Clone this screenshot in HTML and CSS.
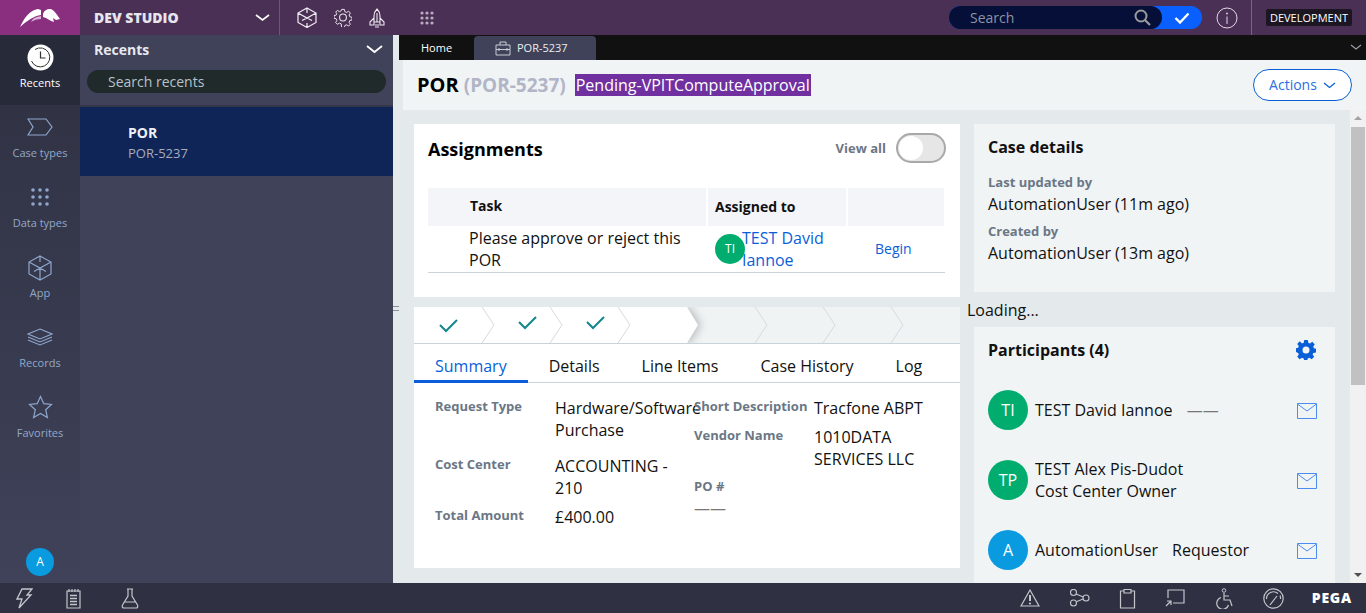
FILE: index.html
```html
<!DOCTYPE html>
<html lang="en">
<head>
    <meta charset="UTF-8">
    <title>POR-5237 - Dev Studio</title>
    <link rel="stylesheet" href="styles.css">
</head>
<body>
    <header class="topbar">
        <div class="logo">
            <svg width="40" height="18" viewBox="0 0 40 18"><path d="M0 18C4 9 10 1 18 0l3 1v5C14 7 8 11 0 18z" fill="#fff"/><path d="M11 13c2-4 5-5 10-6v3c-4 0-7 1-10 3z" fill="#d8b6d4"/><path d="M23 5c1-3 3-5 8-5 4 2 6 6 9 10l-4 1-3-2 1 4c-4-1-7-4-11-5z" fill="#fff"/></svg>
        </div>
        <div class="studio">
            <span class="studio-name">DEV STUDIO</span>
            <svg class="chev" width="15" height="8" viewBox="0 0 15 8"><path d="M1 1l6.500 5L14 1" fill="none" stroke="#fff" stroke-width="1.600"/></svg>
        </div>
        <div class="top-tools">
            <svg width="20" height="21" viewBox="0 0 20 21" class="tool-cube"><path d="M10 1l9 5v9.500l-9 5-9-5V6zM1 6l9 5 9-5M10 1v5M10 11l-5 2.500M10 11l5 2.500M10 16v4.500" fill="none" stroke="#f2f0f4" stroke-width="1.200"/></svg>
            <svg width="18" height="19" viewBox="0 0 20 20" class="tool-gear"><circle cx="10" cy="10" r="3.800" fill="none" stroke="#e8e4ec" stroke-width="1.200"/><path d="M8.500 1h3l.5 2.500 2 .9 2.200-1.400 2 2.100-1.400 2.100.8 2 2.400.6v3l-2.400.5-.8 2 1.400 2.100-2 2.100-2.200-1.400-2 .9-.5 2.500h-3L8 17.100l-2-.9L3.800 17.600l-2-2.100L3.200 13.400l-.8-2L0 10.900v-3l2.400-.6.800-2L1.800 4.200l2-2.100L6 3.500l2-.9z" fill="none" stroke="#e8e4ec" stroke-width="1.100"/></svg>
            <svg width="16" height="20" viewBox="0 0 16 20" class="tool-rocket"><path d="M8 1c2 2 3 4 3 7v6H5V8c0-3 1-5 3-7zM5 10l-4 4v3h4zM11 10l4 4v3h-4zM6 17h4M6 19h4M8 5v9" fill="none" stroke="#eee8f0" stroke-width="1.100"/></svg>
            <svg width="14" height="14" viewBox="0 0 14 14" class="tool-grid" fill="#b9abc0"><circle cx="2" cy="2" r="1.600"/><circle cx="7" cy="2" r="1.600"/><circle cx="12" cy="2" r="1.600"/><circle cx="2" cy="7" r="1.600"/><circle cx="7" cy="7" r="1.600"/><circle cx="12" cy="7" r="1.600"/><circle cx="2" cy="12" r="1.600"/><circle cx="7" cy="12" r="1.600"/><circle cx="12" cy="12" r="1.600"/></svg>
        </div>
        <div class="top-right">
            <div class="search">
                <div class="search-field">
                    <span>Search</span>
                    <svg width="17" height="17" viewBox="0 0 17 17"><circle cx="7" cy="7" r="5.500" fill="none" stroke="#9a9a9a" stroke-width="2"/><path d="M11 11l5 5" stroke="#9a9a9a" stroke-width="2.200"/></svg>
                </div>
                <svg class="search-check" width="16" height="12" viewBox="0 0 16 12"><path d="M1.500 6l4.500 4.500L14.500 1.500" fill="none" stroke="#fff" stroke-width="2.400"/></svg>
            </div>
            <svg class="info" width="22" height="22" viewBox="0 0 22 22"><circle cx="11" cy="11" r="10" fill="none" stroke="#e0d8e4" stroke-width="1"/><path d="M11 9.500V17" stroke="#e0d8e4" stroke-width="1"/><circle cx="11" cy="6.500" r=".9" fill="#e0d8e4"/></svg>
            <div class="env-wrap"><span class="env">DEVELOPMENT</span></div>
        </div>
    </header>

    <div class="workspace">
        <nav class="rail">
            <a class="rail-item active">
                <svg class="gap-4" width="27" height="27" viewBox="0 0 27 27"><circle cx="13.500" cy="13.500" r="13" fill="#fff"/><path d="M8 5.500A9.500 9.500 0 1 1 4.500 17" fill="none" stroke="#333" stroke-width="1"/><path d="M13.500 7.500v6.500h5" fill="none" stroke="#333" stroke-width="1.200"/></svg>
                <span>Recents</span>
            </a>
            <a class="rail-item">
                <svg class="gap-9" width="26" height="18" viewBox="0 0 26 18"><path d="M1 1h18l6 8-6 8H1l5-8z" fill="none" stroke="#8fa6cc" stroke-width="1.200"/></svg>
                <span>Case types</span>
            </a>
            <a class="rail-item">
                <svg class="gap-9" width="18" height="18" viewBox="0 0 18 18" fill="#8fa6cc"><circle cx="2" cy="2" r="1.800"/><circle cx="9" cy="2" r="1.800"/><circle cx="16" cy="2" r="1.800"/><circle cx="2" cy="9" r="1.800"/><circle cx="9" cy="9" r="1.800"/><circle cx="16" cy="9" r="1.800"/><circle cx="2" cy="16" r="1.800"/><circle cx="9" cy="16" r="1.800"/><circle cx="16" cy="16" r="1.800"/></svg>
                <span>Data types</span>
            </a>
            <a class="rail-item">
                <svg class="gap-4" width="24" height="26" viewBox="0 0 24 26"><path d="M12 1l11 6v12l-11 6-11-6V7zM1 7l11 6 11-6M12 1v6M12 13v12M12 13l-6 3.500M12 13l6 3.500" fill="none" stroke="#8fa6cc" stroke-width="1.200"/></svg>
                <span>App</span>
            </a>
            <a class="rail-item">
                <svg class="gap-9" width="26" height="18" viewBox="0 0 26 18"><path d="M13 1l12 5-12 5L1 6zM1 9l12 5 12-5M1 12l12 5 12-5" fill="none" stroke="#8fa6cc" stroke-width="1.100"/></svg>
                <span>Records</span>
            </a>
            <a class="rail-item">
                <svg class="gap-6" width="25" height="24" viewBox="0 0 25 24"><path d="M12.500 1.500l3.300 7.200 7.700.8-5.800 5.200 1.700 7.800-6.900-4-6.900 4 1.700-7.800L1.500 9.500l7.700-.8z" fill="none" stroke="#8fa6cc" stroke-width="1.200"/></svg>
                <span>Favorites</span>
            </a>
            <div class="rail-avatar">A</div>
        </nav>

        <aside class="recents">
            <div class="recents-head">
                <span>Recents</span>
                <svg width="17" height="9" viewBox="0 0 17 9"><path d="M1 1l7.500 6L16 1" fill="none" stroke="#fff" stroke-width="1.800"/></svg>
            </div>
            <div class="recents-search">Search recents</div>
            <div class="recent-item">
                <b>POR</b>
                <span>POR-5237</span>
            </div>
        </aside>

        <div class="splitter"><span class="grip"></span></div>

        <main class="main">
            <div class="tabbar">
                <span class="home-tab">Home</span>
                <span class="case-tab">
                    <svg width="16" height="15" viewBox="0 0 16 15"><path d="M1 4h14v10H1zM5 4V1h6v3M1 8.500h3M12 8.500h3M4 7v3M12 7v3M4 8.500h8" fill="none" stroke="#c9cbd6" stroke-width="1"/></svg>
                    POR-5237
                </span>
                <svg class="tabbar-more" width="12" height="6" viewBox="0 0 12 6"><path d="M1 1l5 4 5-4" fill="none" stroke="#9aa0a8" stroke-width="1.200"/></svg>
            </div>
            <div class="case-head">
                <h1>POR</h1>
                <span class="case-id">(POR-5237)</span>
                <span class="case-status">Pending-VPITComputeApproval</span>
                <button class="actions"><span class="actions-label">Actions</span>
                    <svg width="13" height="7" viewBox="0 0 13 7"><path d="M1 1l5.500 4.500L12 1" fill="none" stroke="#0a5fd9" stroke-width="1.300"/></svg>
                </button>
            </div>
            <div class="case-scroll">
                <div class="case-body">
                    <div class="col-left">
                        <section class="card assignments">
                            <div class="card-head">
                                <h2>Assignments</h2>
                                <span class="view-all">View all</span>
                                <span class="toggle"><span class="knob"></span></span>
                            </div>
                            <div class="assign-grid">
                                <div class="th th-task">Task</div>
                                <div class="th">Assigned to</div>
                                <div class="th"></div>
                                <div class="td td-task">Please approve or reject this POR</div>
                                <div class="td td-user">
                                    <span class="avatar small green">TI</span>
                                    <a class="link user-link">TEST David Iannoe</a>
                                </div>
                                <div class="td td-begin"><a class="link">Begin</a></div>
                            </div>
                        </section>

                        <section class="card summary">
                            <svg class="stages" width="546" height="37" viewBox="0 0 546 37">
                                <rect width="546" height="37" fill="#f0f3f4"/>
                                <polygon class="stage-done" points="0,0 273,0 284,18 273,36 0,36" fill="#fff"/>
                                <g fill="none" stroke="#d5dade" stroke-width="1">
                                    <path d="M68 0l12 18-12 18M136 0l12 18-12 18M204 0l12 18-12 18M341 0l12 18-12 18M409 0l12 18-12 18M477 0l12 18-12 18"/>
                                    <path d="M0 36.500h546" stroke="#c8d3dc"/>
                                </g>
                                <g fill="none" stroke="#14868c" stroke-width="2">
                                    <path d="M26 18l6 6 11-11M105 15l6 6 11-11M173 15l6 6 11-11"/>
                                </g>
                            </svg>
                            <div class="tabs">
                                <span class="tab current">Summary</span>
                                <span class="tab">Details</span>
                                <span class="tab">Line Items</span>
                                <span class="tab">Case History</span>
                                <span class="tab">Log</span>
                            </div>
                            <div class="fields">
                                <div class="field-col">
                                    <div class="field tall"><label>Request Type</label><div class="value">Hardware/Software Purchase</div></div>
                                    <div class="field"><label>Cost Center</label><div class="value">ACCOUNTING - 210</div></div>
                                    <div class="field"><label>Total Amount</label><div class="value">£400.00</div></div>
                                </div>
                                <div class="field-col">
                                    <div class="field"><label>Short Description</label><div class="value">Tracfone ABPT</div></div>
                                    <div class="field"><label>Vendor Name</label><div class="value">1010DATA SERVICES LLC</div></div>
                                    <div class="field stacked"><label>PO #</label><div class="value">——</div></div>
                                </div>
                            </div>
                        </section>
                    </div>

                    <div class="col-right">
                        <section class="details">
                            <h3>Case details</h3>
                            <label>Last updated by</label>
                            <div class="value">AutomationUser (11m ago)</div>
                            <label>Created by</label>
                            <div class="value">AutomationUser (13m ago)</div>
                        </section>
                        <div class="loading">Loading...</div>
                        <section class="participants">
                            <div class="part-head">
                                <h3>Participants (4)</h3>
                                <svg width="20" height="20" viewBox="0 0 20 20"><path fill-rule="evenodd" fill="#0a5fd9" d="M8.200 0h3.600l.5 2.700 1.700.7L16.300 1.800l2.500 2.600-1.600 2.200.7 1.700 2.100.5v3.600l-2.700.5-.7 1.700 1.600 2.200-2.500 2.500-2.300-1.600-1.700.7-.5 2.600H8.200l-.5-2.600-1.700-.7-2.300 1.600-2.500-2.500 1.600-2.200-.7-1.700L0 11.900V8.300l2.100-.5.700-1.700-1.600-2.200 2.500-2.600L6 3.400l1.700-.7zM10 6.500a3.500 3.500 0 1 0 0 7 3.500 3.500 0 0 0 0-7z"/></svg>
                            </div>
                            <div class="person">
                                <span class="avatar green">TI</span>
                                <div class="person-text">TEST David Iannoe <span class="role dash">——</span></div>
                                <svg class="mail" width="20" height="16" viewBox="0 0 20 16"><path d="M.5.500h19v15H.5zM.5 1l9.500 7 9.500-7" fill="none" stroke="#4a8cf0" stroke-width="1"/></svg>
                            </div>
                            <div class="person">
                                <span class="avatar green">TP</span>
                                <div class="person-text">TEST Alex Pis-Dudot<br>Cost Center Owner</div>
                                <svg class="mail" width="20" height="16" viewBox="0 0 20 16"><path d="M.5.500h19v15H.5zM.5 1l9.500 7 9.500-7" fill="none" stroke="#4a8cf0" stroke-width="1"/></svg>
                            </div>
                            <div class="person">
                                <span class="avatar blue">A</span>
                                <div class="person-text">AutomationUser <span class="role">Requestor</span></div>
                                <svg class="mail" width="20" height="16" viewBox="0 0 20 16"><path d="M.5.500h19v15H.5zM.5 1l9.500 7 9.500-7" fill="none" stroke="#4a8cf0" stroke-width="1"/></svg>
                            </div>
                        </section>
                    </div>
                </div>
                <div class="scrollbar">
                    <span class="arrow-up"></span>
                    <span class="thumb"></span>
                    <span class="arrow-down"></span>
                </div>
            </div>
        </main>
    </div>

    <footer class="bottombar">
        <div class="dev-tools">
            <svg width="17" height="21" viewBox="0 0 17 21"><path d="M6 1h10l-5 6h4L3 20l3-9H1z" fill="none" stroke="#c4c6cc" stroke-width="1.300"/></svg>
            <svg width="15" height="21" viewBox="0 0 15 21"><path d="M1 3h13v17H1zM3 1v3M6 1v3M9 1v3M12 1v3" fill="none" stroke="#c4c6cc" stroke-width="1.200"/><path d="M4 7.500h7M4 10.500h7M4 13.500h7M4 16.500h7" stroke="#c4c6cc" stroke-width="1.300"/></svg>
            <svg class="tool-flask" width="18" height="21" viewBox="0 0 18 21"><path d="M6 1h6M7 1v7L1.500 17c-.8 1.600 0 3 1.500 3h12c1.500 0 2.300-1.400 1.500-3L11 8V1M4 14h10" fill="none" stroke="#c4c6cc" stroke-width="1.200"/></svg>
        </div>
        <div class="status-tools">
            <svg width="20" height="18" viewBox="0 0 20 18"><path d="M10 1l9 16H1z" fill="none" stroke="#c4c6cc" stroke-width="1.200"/><path d="M10 6v6" stroke="#c4c6cc" stroke-width="2"/><circle cx="10" cy="14.500" r="1.100" fill="#c4c6cc"/></svg>
            <svg width="21" height="18" viewBox="0 0 21 18"><circle cx="4.500" cy="3.500" r="3" fill="none" stroke="#c4c6cc" stroke-width="1.100"/><circle cx="4.500" cy="14" r="3" fill="none" stroke="#c4c6cc" stroke-width="1.100"/><circle cx="17" cy="9" r="3" fill="none" stroke="#c4c6cc" stroke-width="1.100"/><path d="M7.200 5l7 3M7.200 12.800l7-2.800" stroke="#c4c6cc" stroke-width="1.100"/></svg>
            <svg width="17" height="21" viewBox="0 0 17 21"><path d="M5 3H1.500v17h14V3H12M5 1.500h7V5H5z" fill="none" stroke="#c4c6cc" stroke-width="1.200"/></svg>
            <svg width="20" height="18" viewBox="0 0 20 18"><path d="M3 9V1h16v13H8M1 17l5-5M2 12h4v4" fill="none" stroke="#c4c6cc" stroke-width="1.200"/></svg>
            <svg width="20" height="21" viewBox="0 0 20 21"><circle cx="10" cy="2.500" r="1.800" fill="none" stroke="#c4c6cc" stroke-width="1"/><path d="M10 5v7h6l2 6M10 8h5M7 9.500a6 6 0 1 0 7.500 7.500" fill="none" stroke="#c4c6cc" stroke-width="1.200"/></svg>
            <svg width="21" height="21" viewBox="0 0 21 21"><circle cx="10.500" cy="10.500" r="9.700" fill="none" stroke="#c4c6cc" stroke-width="1.200"/><path d="M3.500 11a7 7 0 0 1 11.500-5.500M17 7.500a7 7 0 0 1 .5 3.500M7 17l7-9" fill="none" stroke="#c4c6cc" stroke-width="1.200"/></svg>
            <span class="pega">PEGA</span>
        </div>
    </footer>
</body>
</html>
```

FILE: styles.css
```css
* {
    box-sizing: border-box;
}

html, body {
    height: 100%;
}

body {
    margin: 0;
    display: flex;
    flex-direction: column;
    overflow: hidden;
    font-family: "Open Sans", sans-serif;
    font-size: 16px;
    line-height: 22px;
    color: #111;
    background: #e4e9ec;
}

h1, h2, h3 {
    margin: 0;
}

svg {
    display: block;
    flex: none;
}

/* top bar */
.topbar {
    height: 35px;
    flex: none;
    display: flex;
    align-items: center;
    background: #4b3056;
}

.logo {
    width: 80px;
    height: 35px;
    display: flex;
    align-items: center;
    justify-content: center;
    background: #8a2f80;
}

.studio {
    width: 200px;
    height: 35px;
    display: flex;
    align-items: center;
    justify-content: space-between;
    padding: 0 9px 0 14px;
    border-right: 1px solid #6e5678;
}

.studio-name {
    font-weight: 800;
    font-size: 14px;
    color: #e6e6ec;
}

.top-tools {
    display: flex;
    align-items: center;
    padding-left: 17px;
}

.tool-gear {
    margin-left: 17px;
}

.tool-rocket {
    margin-left: 17px;
}

.tool-grid {
    margin-left: 35px;
}

.top-right {
    margin-left: auto;
    display: flex;
    align-items: center;
    height: 35px;
}

.search {
    width: 253px;
    height: 23px;
    display: flex;
    align-items: center;
    background: #0a5fff;
    border-radius: 12px;
}

.search-field {
    width: 213px;
    height: 23px;
    display: flex;
    align-items: center;
    justify-content: space-between;
    padding: 0 11px 0 21px;
    background: #050f38;
    border-radius: 12px;
    font-size: 14px;
    color: #8d93a3;
}

.search-check {
    margin-left: 12px;
}

.info {
    margin-left: 14px;
}

.env-wrap {
    margin-left: 13px;
    height: 35px;
    display: flex;
    align-items: center;
    padding: 0 14px;
    border-left: 1px solid #7a6484;
}

.env {
    display: block;
    padding: 0 4px;
    height: 17px;
    line-height: 17px;
    font-size: 11px;
    color: #fff;
    background: #1b1622;
    border-radius: 2px;
}

/* left side */
.workspace {
    flex: 1;
    min-height: 0;
    display: flex;
}

.rail {
    width: 80px;
    flex: none;
    display: flex;
    flex-direction: column;
    background: linear-gradient(#2f3142, #3f4259);
}

.rail-item {
    height: 70px;
    flex: none;
    display: flex;
    flex-direction: column;
    align-items: center;
    justify-content: flex-end;
    padding-bottom: 14px;
    font-size: 11px;
    line-height: 16px;
    color: #93a8c8;
}

.gap-4 {
    margin-bottom: 4px;
}

.gap-6 {
    margin-bottom: 6px;
}

.gap-9 {
    margin-bottom: 9px;
}

.rail-item.active {
    background: #272a38;
    color: #fff;
}

.rail-avatar {
    width: 28px;
    height: 28px;
    margin: auto auto 7px;
    border-radius: 50%;
    background: #0a9ae0;
    color: #fff;
    font-size: 12px;
    line-height: 28px;
    text-align: center;
}

.recents {
    width: 313px;
    flex: none;
    background: #3f4259;
}

.recents-head {
    height: 29px;
    margin-bottom: 6px;
    display: flex;
    align-items: center;
    justify-content: space-between;
    padding: 0 10px 0 14px;
    font-size: 14px;
    font-weight: 700;
    color: #e8e8ee;
}

.recents-search {
    height: 23px;
    margin-left: 7px;
    width: 299px;
    padding-left: 21px;
    border-radius: 12px;
    background: #202a2b;
    font-size: 14px;
    line-height: 23px;
    color: #b8c2ca;
}

.recent-item {
    height: 71px;
    margin-top: 12px;
    padding: 16px 0 0 48px;
    display: flex;
    flex-direction: column;
    border-top: 2px solid #34364a;
    background: #0f2558;
    font-size: 13px;
    line-height: 20px;
    color: #a9acba;
}

.recent-item b {
    font-size: 14px;
    color: #eef0f5;
}

.splitter {
    width: 6px;
    flex: none;
    display: flex;
    align-items: center;
    justify-content: center;
    padding-bottom: 2px;
}

.grip {
    display: block;
    width: 6px;
    height: 5px;
    border-top: 1px solid #8b9198;
    border-bottom: 1px solid #8b9198;
}

/* main area */
.main {
    flex: 1;
    min-width: 0;
    display: flex;
    flex-direction: column;
}

.tabbar {
    height: 25px;
    flex: none;
    display: flex;
    align-items: flex-end;
    background: #111;
    color: #fff;
    font-size: 11px;
}

.home-tab {
    height: 25px;
    line-height: 25px;
    margin-left: 22px;
    width: 53px;
}

.case-tab {
    width: 122px;
    height: 24px;
    display: flex;
    align-items: center;
    gap: 6px;
    padding-left: 21px;
    background: #3f4259;
    border-radius: 4px 4px 0 0;
    color: #eceef3;
}

.tabbar-more {
    margin: 0 4px 10px auto;
}

.case-head {
    height: 50px;
    flex: none;
    margin-left: 4px;
    display: flex;
    align-items: center;
    padding: 0 14px;
    background: #f0f4f5;
}

.case-head h1 {
    font-size: 20px;
    font-weight: 700;
    color: #000;
}

.case-id {
    margin-left: 5px;
    font-size: 19px;
    font-weight: 700;
    color: #b2b5c8;
}

.case-status {
    margin-left: 9px;
    padding: 0 1px;
    background: #7030a0;
    color: #fff;
    font-size: 16px;
}

.actions {
    margin-left: auto;
    width: 99px;
    height: 32px;
    display: flex;
    align-items: center;
    justify-content: center;
    gap: 6px;
    background: #fff;
    border: 1px solid #0a5fd9;
    border-radius: 16px;
    color: #2a6fe0;
    font-family: inherit;
    font-size: 14px;
}

.actions-label {
    padding-bottom: 2px;
}

.case-scroll {
    flex: 1;
    min-height: 0;
    display: flex;
    overflow: hidden;
}

.case-body {
    flex: 1;
    min-width: 0;
    height: 600px;
    display: flex;
    gap: 14px;
    padding: 14px 15px;
}

.col-left {
    width: 546px;
    flex: none;
    display: flex;
    flex-direction: column;
    gap: 10px;
}

.col-right {
    flex: 1;
    min-width: 0;
}

.card {
    background: #fff;
}

/* assignments */
.assignments {
    height: 173px;
    padding: 9px 14px 0;
}

.card-head {
    height: 30px;
    display: flex;
    align-items: center;
}

.card-head h2 {
    font-size: 18px;
    font-weight: 700;
    color: #000;
    padding-top: 2px;
}

.view-all {
    margin-left: auto;
    font-size: 13px;
    font-weight: 700;
    color: #6b7785;
}

.toggle {
    width: 50px;
    height: 30px;
    margin-left: 10px;
    padding: 1px;
    border: 2px solid #a9a9a9;
    border-radius: 15px;
    background: #e6e6e6;
}

.knob {
    display: block;
    width: 24px;
    height: 24px;
    border-radius: 50%;
    background: #fff;
}

.assign-grid {
    margin-top: 25px;
    display: grid;
    grid-template-columns: 278px 138px 96px;
    column-gap: 2px;
    grid-template-rows: 38px 46px;
    border-bottom: 1px solid #c8d3dc;
    width: 517px;
}

.th {
    display: flex;
    align-items: center;
    padding-left: 7px;
    background: #f3f5f8;
    font-size: 14px;
    font-weight: 700;
    color: #111;
}

.th-task {
    padding: 0 0 2px 42px;
}

.td {
    display: flex;
    align-items: center;
}

.td-task {
    padding-left: 41px;
}

.td-user {
    padding-left: 7px;
}

.td-begin {
    font-size: 14px;
    padding-left: 27px;
}

.link {
    color: #0a5fd9;
}

.user-link {
    margin-left: -3px;
}

.avatar {
    width: 40px;
    height: 40px;
    flex: none;
    border-radius: 50%;
    color: #fff;
    text-align: center;
    line-height: 40px;
}

.avatar.small {
    position: relative;
    width: 30px;
    height: 30px;
    font-size: 12px;
    line-height: 30px;
}

.avatar.green {
    background: #00ad6e;
}

.avatar.blue {
    background: #0a9ae0;
}

/* stages, tabs, fields */
.summary {
    height: 261px;
}

.stage-done {
    filter: drop-shadow(3px 0 4px rgba(0, 0, 0, 0.22));
}

.tabs {
    height: 39px;
    display: flex;
    border-bottom: 1px solid #c8d3dc;
}

.tab {
    height: 38px;
    padding: 11px 21px 0;
}

.tab.current {
    color: #0a5fd9;
    border-bottom: 3px solid #0a5fd9;
    height: 39px;
}

.fields {
    display: flex;
    padding: 12px 0 0 21px;
}

.field-col {
    width: 259px;
    flex: none;
}

.field {
    display: flex;
    padding-bottom: 5px;
}

.field.tall {
    padding-bottom: 12px;
}

.field.stacked {
    display: block;
}

.field label {
    display: block;
    width: 120px;
    flex: none;
    white-space: nowrap;
    font-size: 13px;
    font-weight: 700;
    color: #6b7785;
}

.field .value {
    width: 127px;
    flex: none;
    margin-top: 2px;
}

.field.stacked .value {
    margin-top: 0;
    color: #777;
}

/* case details */
.details {
    height: 168px;
    padding: 12px 14px;
    background: #f0f4f5;
}

h3 {
    font-size: 16px;
    font-weight: 700;
    color: #111;
}

.details h3 {
    margin-bottom: 13px;
}

.details label {
    display: block;
    font-size: 13px;
    font-weight: 700;
    color: #6b7785;
}

.details .value {
    margin-bottom: 5px;
}

.loading {
    height: 35px;
    padding-top: 7px;
    margin-left: -7px;
}

.participants {
    padding: 12px 18px 0 14px;
    height: 300px;
    background: #f0f4f5;
}

.part-head {
    display: flex;
    justify-content: space-between;
    align-items: center;
    height: 22px;
    margin-bottom: 29px;
    padding-right: 1px;
}

.person {
    height: 40px;
    margin-bottom: 30px;
    display: flex;
    align-items: center;
    gap: 7px;
}

.person-text {
    flex: 1;
}

.mail {
    margin-top: 2px;
}

.role {
    margin-left: 10px;
}

.dash {
    color: #777;
}

/* fake scrollbar, the page itself does not scroll */
.scrollbar {
    width: 16px;
    flex: none;
    display: flex;
    flex-direction: column;
    align-items: center;
    background: #f1f1f1;
}

.arrow-up {
    margin-top: 6px;
    border: 4px solid transparent;
    border-top: 0;
    border-bottom: 4px solid #a3a3a3;
}

.thumb {
    width: 14px;
    height: 258px;
    margin-top: 7px;
    background: #c1c1c1;
}

.arrow-down {
    margin-top: auto;
    margin-bottom: 6px;
    border: 4px solid transparent;
    border-bottom: 0;
    border-top: 4px solid #505050;
}

/* bottom bar */
.bottombar {
    height: 30px;
    flex: none;
    display: flex;
    align-items: center;
    justify-content: space-between;
    background: #2f3142;
}

.dev-tools {
    display: flex;
    align-items: center;
    gap: 33px;
    padding-left: 16px;
}

.tool-flask {
    margin-left: 7px;
}

.status-tools {
    display: flex;
    align-items: center;
    gap: 29px;
    padding-right: 14px;
}

.pega {
    margin-left: -1px;
    font-size: 14px;
    font-weight: 800;
    letter-spacing: 0.800px;
    color: #fff;
}
```
